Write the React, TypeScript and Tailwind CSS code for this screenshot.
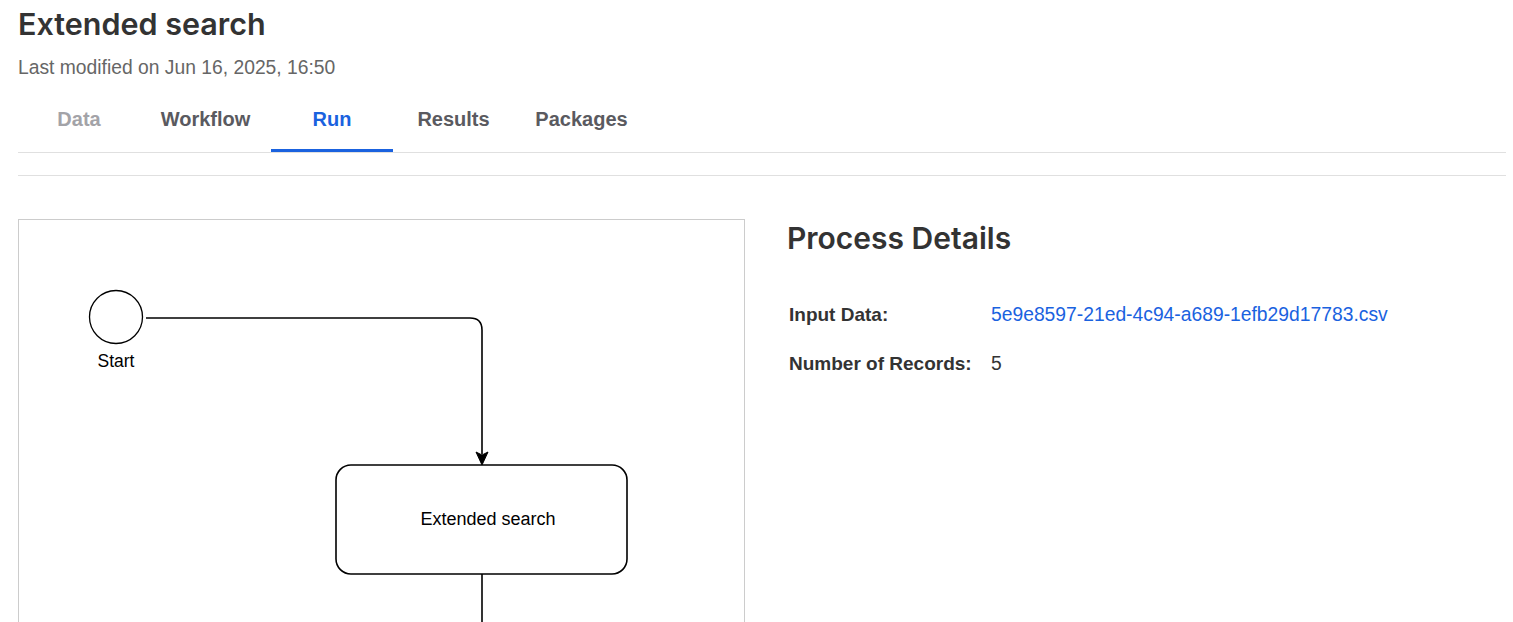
import React from "react";

const tabs = [
  { label: "Data", state: "disabled", width: "w-[122px]" },
  { label: "Workflow", state: "normal", width: "w-[131px]" },
  { label: "Run", state: "active", width: "w-[122px]" },
  { label: "Results", state: "normal", width: "w-[121px]" },
  { label: "Packages", state: "normal", width: "w-[135px]" },
];

const diagramFont = "'Liberation Sans', Arial, sans-serif";

function Diagram() {
  return (
    <svg width="725" height="420" viewBox="0 0 725 420" className="block">
      {/* start event */}
      <circle cx="97" cy="97" r="26.5" fill="#fff" stroke="#000" strokeWidth="1.3" />
      <text x="97" y="147" textAnchor="middle" fontFamily={diagramFont} fontSize="17.5" fill="#000">
        Start
      </text>
      {/* flow from start to task */}
      <path d="M127 98 H451 Q463 98 463 110 V234" fill="none" stroke="#000" strokeWidth="1.6" />
      <path d="M457 232 L463 235 L469 232 L463 245 Z" fill="#000" stroke="#000" strokeWidth="1" strokeLinejoin="miter" />
      {/* task */}
      <rect x="317" y="245" width="291" height="109" rx="15" ry="15" fill="#fff" stroke="#000" strokeWidth="1.6" />
      <text x="469" y="305" textAnchor="middle" fontFamily={diagramFont} fontSize="18" fill="#000">
        Extended search
      </text>
      {/* outgoing flow */}
      <path d="M463 354 V420" fill="none" stroke="#000" strokeWidth="1.6" />
    </svg>
  );
}

export default function App() {
  return (
    <div className="w-[1513px] h-[622px] overflow-hidden bg-white px-[18px] text-[#333]" style={{ fontFamily: "'Liberation Sans', Arial, sans-serif" }}>
      <h1 className="pt-[6px] text-[30.5px] leading-[36px] font-semibold text-[#333]" style={{ fontFamily: "Inter, 'Noto Sans', sans-serif" }}>
        Extended search
      </h1>
      <div className="mt-[16px] text-[19.3px] leading-[20px] text-[#666]">Last modified on Jun 16, 2025, 16:50</div>

      <div className="mt-[14px] w-[1488px] border-b border-[#e0e0e0]">
        <div className="flex">
          {tabs.map((t) => (
            <div
              key={t.label}
              className={
                t.width +
                " h-[60px] flex items-start justify-center pt-[16px] text-[20px] leading-[22px] font-bold border-b-[3px] " +
                (t.state === "active"
                  ? "border-[#1a62df] text-[#1a62df]"
                  : t.state === "disabled"
                  ? "border-transparent text-[#a3a3a8]"
                  : "border-transparent text-[#5a5a60]")
              }
            >
              {t.label}
            </div>
          ))}
        </div>
      </div>
      <div className="mt-[22px] w-[1488px] border-b border-[#e0e0e0]" />

      <div className="mt-[43px] flex">
        <div className="w-[727px] h-[420px] border border-b-0 border-[#cccccc] overflow-hidden">
          <Diagram />
        </div>
        <div className="ml-[42px] pt-[1px]">
          <h2 className="text-[30px] leading-[36px] font-semibold text-[#333]" style={{ fontFamily: "Inter, 'Noto Sans', sans-serif" }}>
            Process Details
          </h2>
          <div className="mt-[48px] grid grid-cols-[202px_auto] gap-y-[27px] text-[19.3px] leading-[22px] pl-[2px]">
            <div className="font-bold text-[19px] text-[#333]">Input Data:</div>
            <div className="text-[#1a62df]">5e9e8597-21ed-4c94-a689-1efb29d17783.csv</div>
            <div className="font-bold text-[19px] text-[#333]">Number of Records:</div>
            <div className="text-[#333]">5</div>
          </div>
        </div>
      </div>
    </div>
  );
}
